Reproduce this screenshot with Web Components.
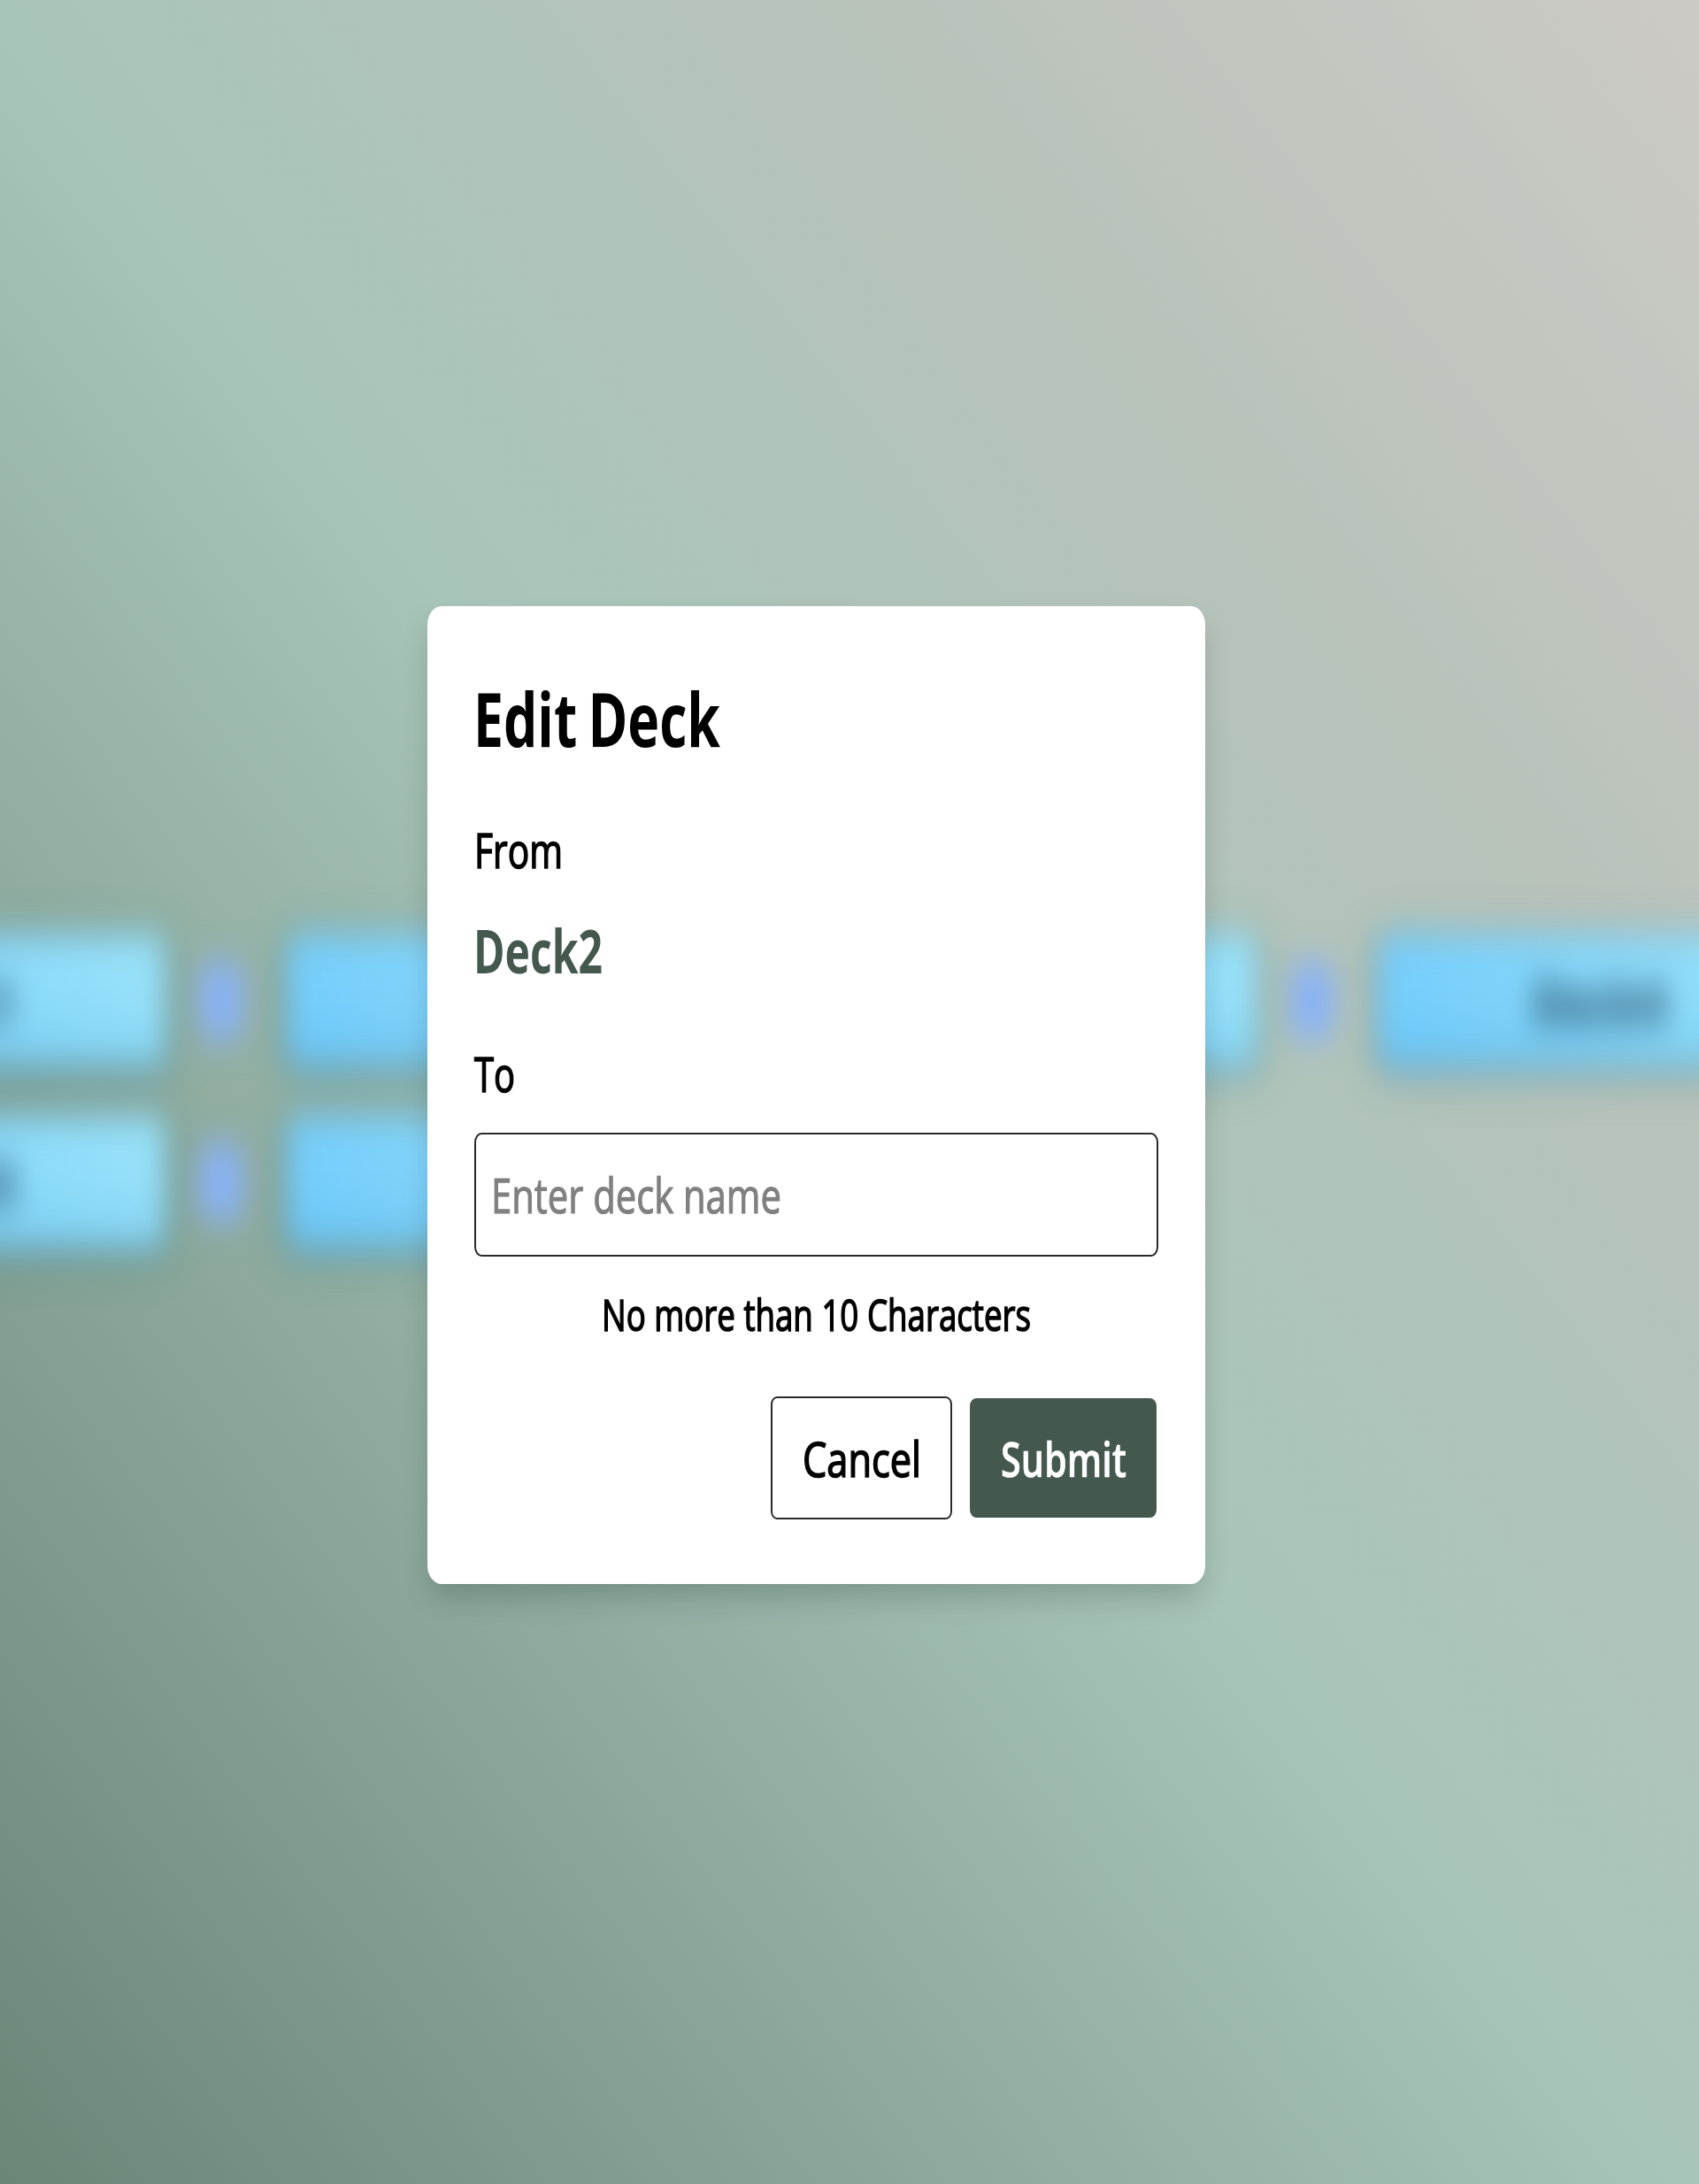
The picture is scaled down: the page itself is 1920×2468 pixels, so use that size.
<!DOCTYPE html>
<html lang="en">
<head>
<meta charset="utf-8">
<title>Edit Deck</title>
<style>
html,body{margin:0;padding:0}
body{font-family:"Open Sans","Noto Sans",sans-serif;color:#000;overflow:hidden}
</style>
</head>
<body>
<deck-page>
  <deck-board slot="board">
    <deck-row>
      <deck-tile style="--shift:-6px">Deck1</deck-tile><deck-dot></deck-dot><deck-tile></deck-tile><deck-dot></deck-dot><deck-tile></deck-tile><deck-dot></deck-dot><deck-tile>Deck4</deck-tile>
    </deck-row>
    <deck-row>
      <deck-tile style="--shift:-4px">Deck5</deck-tile><deck-dot></deck-dot><deck-tile></deck-tile>
    </deck-row>
  </deck-board>
  <edit-dialog slot="dialog"></edit-dialog>
</deck-page>
<script>
const define = (name, html, ready) => customElements.define(name, class extends HTMLElement {
  constructor() {
    super();
    this.attachShadow({ mode: 'open' }).innerHTML = html;
  }
  connectedCallback() { if (ready) ready(this); }
});

define('fit-text', `<style>
  :host{display:block;height:var(--lh);line-height:var(--lh);flex:none}
  span{display:inline-block;white-space:nowrap;transform-origin:0 50%}
</style><span><slot></slot></span>`, el => {
  const width = +el.getAttribute('width');
  const span = el.shadowRoot.querySelector('span');
  el.style.width = width + 'px';
  span.style.transform = 'scaleX(' + width / span.getBoundingClientRect().width + ')';
});

define('deck-tile', `<style>
  :host{display:flex;flex:none;box-sizing:border-box;width:478.5px;height:149px;padding-top:4px;align-items:center;justify-content:center;
    border-radius:12px/16px;background:linear-gradient(180deg,transparent 50%,rgba(60,160,220,.22)),linear-gradient(90deg,#74cdfb,#98e1f9);box-shadow:0 6px 24px 5px rgba(40,110,135,.5);
    color:#1c4058;font-size:64px;font-weight:700}
  span{transform:translateX(var(--shift,10px)) scaleX(.78)}
</style><span><slot></slot></span>`);

define('deck-dot', `<style>
  :host{display:block;flex:none;width:50px;height:88px;margin:0 50px 0 38px;border-radius:12px/16px;background:#88b2f6}
</style>`);

define('deck-row', `<style>
  :host{display:flex;align-items:center}
</style><slot></slot>`);

define('deck-board', `<style>
  :host{display:block;overflow:hidden;width:1920px;height:2468px}
  .rows{display:flex;flex-direction:column;gap:56px;width:2400px;padding-top:1056px;margin-left:-292px;filter:url(#soft)}
  svg{display:block;width:0;height:0}
</style>
<svg><filter id="soft" x="-5%" y="-5%" width="110%" height="110%" color-interpolation-filters="sRGB"><feGaussianBlur stdDeviation="15.5 20"/></filter></svg>
<div class="rows"><slot></slot></div>`);

define('deck-page', `<style>
  :host{display:grid;width:1920px;height:2468px;overflow:hidden;background:linear-gradient(to top right,#698677,#a8c5b9 49.5%,#a9c5b9 51%,#b9c3ba 76%,#cccac5)}
  slot{display:block;grid-area:1/1}
  .top{grid-area:1/1;place-self:start;padding:685px 0 0 483px;z-index:1}
</style><slot name="board"></slot><div class="top"><slot name="dialog"></slot></div>`);

define('edit-dialog', `<style>
  :host{display:flex;flex-direction:column;box-sizing:border-box;width:879px;height:1104.5px;padding:68px 53px 0;
    background:#fff;border-radius:16px/21px;box-shadow:0 18px 34px -4px rgba(0,0,0,.19)}
  .title{--lh:116px;font-size:85px;font-weight:700;margin-left:-1px;word-spacing:-5px}
  .label{--lh:74px;font-size:54px}
  .label,.hint,.cancel{-webkit-text-stroke:1.6px #000}
  .from{margin-top:54px}
  .name{--lh:92px;margin-top:31px;font-size:68px;font-weight:700;color:#44584e;margin-left:-1px}
  .to{margin-top:56px}
  .field{display:flex;align-items:center;box-sizing:border-box;width:773px;height:140px;margin-top:30px;padding-left:17px;
    border:solid #2a2a2a;border-width:2.5px 2px;border-radius:8px/11px}
  .field fit-text{--lh:74px;font-size:54px;color:#808080;-webkit-text-stroke:1.2px #808080}
  .hint{--lh:66px;font-size:49px;align-self:center;margin-top:32px}
  .actions{display:flex;justify-content:flex-end;align-items:center;gap:20px;margin-top:60px;padding-right:2px}
  .btn{display:flex;box-sizing:border-box;align-items:center;justify-content:center;border-radius:7px/9px}
  .btn fit-text{--lh:74px;font-size:54px}
  .cancel{width:205px;height:139px;border:solid #2a2a2a;border-width:2.5px 2px}
  .submit{width:211px;height:135px;background:#44584e;color:#fff;font-weight:600;-webkit-text-stroke:.6px #fff}
</style>
<fit-text class="title" width="279">Edit Deck</fit-text>
<fit-text class="label from" width="100">From</fit-text>
<fit-text class="name" width="146">Deck2</fit-text>
<fit-text class="label to" width="46">To</fit-text>
<div class="field"><fit-text width="328">Enter deck name</fit-text></div>
<fit-text class="hint" width="485">No more than 10 Characters</fit-text>
<div class="actions">
  <div class="btn cancel"><fit-text width="134">Cancel</fit-text></div>
  <div class="btn submit"><fit-text width="142">Submit</fit-text></div>
</div>`);
</script>
</body>
</html>
